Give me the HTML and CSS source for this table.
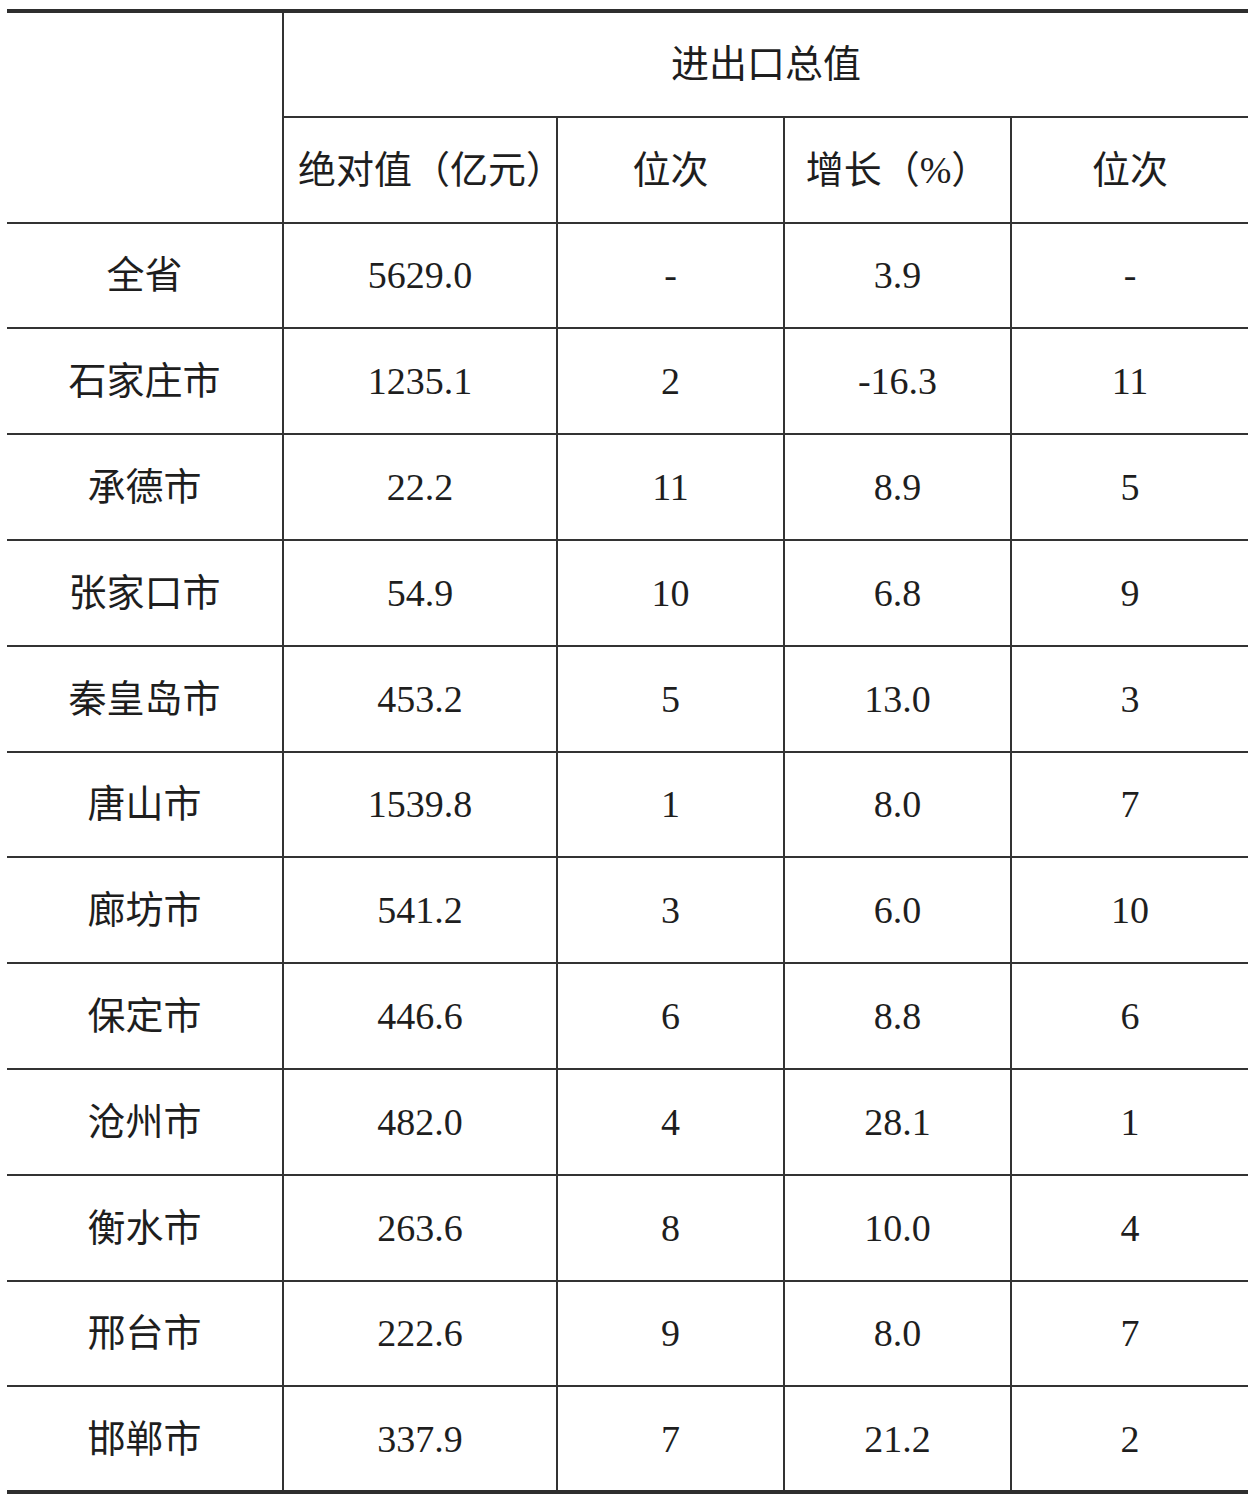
FILE: index.html
```html
<!DOCTYPE html>
<html lang="zh-CN">
<head>
<meta charset="utf-8">
<title>进出口总值</title>
<link rel="stylesheet" href="styles.css">
</head>
<body>
<table class="data">
  <colgroup>
    <col class="c1"><col class="c2"><col class="c3"><col class="c4"><col class="c5">
  </colgroup>
  <thead>
    <tr class="row">
      <th rowspan="2" class="corner"></th>
      <th colspan="4">进出口总值</th>
    </tr>
    <tr class="row">
      <th class="wide">绝对值（亿元）</th>
      <th>位次</th>
      <th>增长（%）</th>
      <th>位次</th>
    </tr>
  </thead>
  <tbody>
    <tr class="row"><td>全省</td><td>5629.0</td><td>-</td><td>3.9</td><td>-</td></tr>
    <tr class="row"><td>石家庄市</td><td>1235.1</td><td>2</td><td>-16.3</td><td>11</td></tr>
    <tr class="row"><td>承德市</td><td>22.2</td><td>11</td><td>8.9</td><td>5</td></tr>
    <tr class="row"><td>张家口市</td><td>54.9</td><td>10</td><td>6.8</td><td>9</td></tr>
    <tr class="row"><td>秦皇岛市</td><td>453.2</td><td>5</td><td>13.0</td><td>3</td></tr>
    <tr class="row"><td>唐山市</td><td>1539.8</td><td>1</td><td>8.0</td><td>7</td></tr>
    <tr class="row"><td>廊坊市</td><td>541.2</td><td>3</td><td>6.0</td><td>10</td></tr>
    <tr class="row"><td>保定市</td><td>446.6</td><td>6</td><td>8.8</td><td>6</td></tr>
    <tr class="row"><td>沧州市</td><td>482.0</td><td>4</td><td>28.1</td><td>1</td></tr>
    <tr class="row"><td>衡水市</td><td>263.6</td><td>8</td><td>10.0</td><td>4</td></tr>
    <tr class="row"><td>邢台市</td><td>222.6</td><td>9</td><td>8.0</td><td>7</td></tr>
    <tr class="row last"><td>邯郸市</td><td>337.9</td><td>7</td><td>21.2</td><td>2</td></tr>
  </tbody>
</table>
</body>
</html>
```
FILE: styles.css
```css
html, body {
  margin: 0;
  padding: 0;
  background: #ffffff;
}

body {
  padding: 9px 3px 0 7px;
}

.data {
  border-collapse: collapse;
  table-layout: fixed;
  width: 1241px;
  font-family: "Liberation Serif", "Noto Sans CJK SC", serif;
  font-size: 38px;
  color: #1e1e1e;
  border-top: 4px solid #2e2e2e;
  border-bottom: 4px solid #2e2e2e;
}

.c1 { width: 276px; }
.c2 { width: 274px; }
.c3 { width: 227px; }
.c4 { width: 227px; }
.c5 { width: 237px; }

.data th,
.data td {
  border: 2px solid #333333;
  text-align: center;
  vertical-align: middle;
  padding: 0;
  font-weight: 400;
  line-height: 1;
}

.data th.wide {
  padding-left: 14px;
}

.data tr > :first-child {
  border-left: none;
}

.data tr > :last-child {
  border-right: none;
}

.data thead tr:first-child th {
  border-top: 4px solid #2e2e2e;
}

.data thead tr:first-child th:last-child {
  border-right: none;
}

.row {
  height: 105.8px;
}

.data .last td {
  border-bottom: 4px solid #2e2e2e;
}
```
